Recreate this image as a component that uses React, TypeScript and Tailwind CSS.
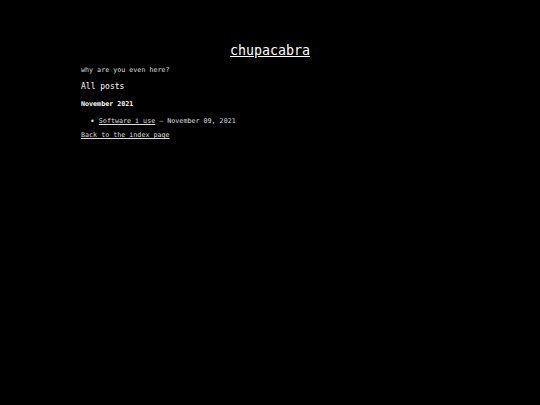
import React from 'react';

const App: React.FC = () => {
  return (
    <div className="min-h-[405px] bg-black text-[#dddddd] font-['DejaVu_Sans_Mono',monospace] text-[6.7px] leading-[1.4]">
      <div className="max-w-[378px] mx-auto pt-[43px]">
        <h1 className="text-center text-[13.3px] leading-[1.2] mb-[7px]">
          <a href="#" className="text-white underline">chupacabra</a>
        </h1>
        <p className="mb-[6px]">why are you even here?</p>
        <h2 className="text-[8px] font-normal text-white mb-[7px]">All posts</h2>
        <h3 className="font-bold text-white mb-[8px]">November 2021</h3>
        <ul className="pl-[9px] mb-[5px]">
          <li className="flex items-center gap-[4px]">
            <span className="text-[8px] leading-none">•</span>
            <span>
              <a href="#" className="underline">Software i use</a> — November 09, 2021
            </span>
          </li>
        </ul>
        <a href="#" className="underline">Back to the index page</a>
      </div>
    </div>
  );
};

export default App;
